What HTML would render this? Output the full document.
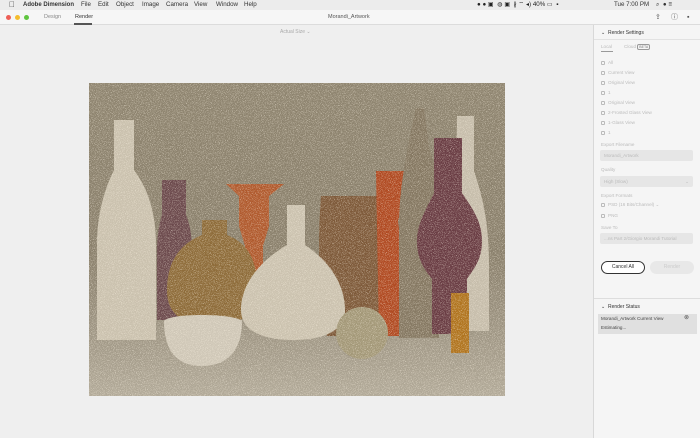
<!DOCTYPE html>
<html><head><style>
*{margin:0;padding:0;box-sizing:border-box}
body{width:700px;height:438px;overflow:hidden;background:#efefef;font-family:"Liberation Sans",sans-serif;position:relative;color:#333}
.a{position:absolute;white-space:nowrap}
.menu{left:0;top:0;width:700px;height:10px;background:#ececec;font-size:6.2px;line-height:10px}
.title{left:0;top:10px;width:700px;height:15px;background:#f6f6f6;border-bottom:1px solid #dcdcdc;font-size:5.5px;line-height:15px;color:#555}
.dot{position:absolute;top:15px;width:5px;height:5px;border-radius:50%}
.panel{left:593px;top:25px;width:107px;height:413px;background:#f5f5f5;border-left:1px solid #d8d8d8;font-size:4.6px;color:#bbb}
.panel .a{line-height:6px}
.cb{display:inline-block;width:4px;height:4px;border:0.6px solid #bbb;border-radius:1px;vertical-align:middle;margin-right:3px}
.fld{position:absolute;left:6px;width:93px;height:11px;background:#e6e6e6;border-radius:2px;color:#bbb;padding-left:4px;line-height:11px;font-size:4.6px}
</style></head><body>
<div class="a menu">
 <span class="a" style="left:9px;font-size:8px">&#63743;</span>
 <span class="a" style="left:23px;font-weight:bold;font-size:6px">Adobe Dimension</span>
 <span class="a" style="left:81px">File</span><span class="a" style="left:98px">Edit</span><span class="a" style="left:116px">Object</span><span class="a" style="left:142px">Image</span><span class="a" style="left:166px">Camera</span><span class="a" style="left:194px">View</span><span class="a" style="left:216px">Window</span><span class="a" style="left:244px">Help</span>
 <span class="a" style="left:477px;color:#222">● ● ▣ &nbsp;◍ ▣ &nbsp;∦ ⌔ ◂) 40% ▭ &nbsp;▪</span>
 <span class="a" style="left:614px">Tue 7:00 PM</span>
 <span class="a" style="left:656px">⌕ &nbsp;● ≡</span>
</div>
<div class="a title">
 <div class="dot" style="left:6px;top:5px;background:#ee5f57"></div>
 <div class="dot" style="left:15px;top:5px;background:#f5bd2f"></div>
 <div class="dot" style="left:24px;top:5px;background:#5fc53f"></div>
 <span class="a" style="left:44px;color:#888">Design</span>
 <span class="a" style="left:75px;color:#333">Render</span>
 <div class="a" style="left:74px;top:13px;width:18px;height:1.5px;background:#555"></div>
 <span class="a" style="left:328px">Morandi_Artwork</span>
 <span class="a" style="left:655px;font-size:7px">⇪</span><span class="a" style="left:671px;font-size:7px">ⓘ</span><span class="a" style="left:687px;font-size:7px">▪</span>
</div>
<div class="a" style="left:280px;top:29px;font-size:5px;color:#aaa">Actual Size ⌄</div>
<svg class="a" style="left:89px;top:83px" width="416" height="313" viewBox="0 0 416 313">
<defs>
<linearGradient id="bg" x1="0" y1="0" x2="0" y2="1"><stop offset="0" stop-color="#8f8570"/><stop offset=".55" stop-color="#8a806c"/><stop offset=".75" stop-color="#9a917f"/><stop offset="1" stop-color="#b2aa99"/></linearGradient>
<filter id="n" x="0" y="0" width="100%" height="100%"><feTurbulence type="fractalNoise" baseFrequency="1.2" numOctaves="2" result="t"/><feColorMatrix in="t" type="matrix" values="0 0 0 0 1 0 0 0 0 0.93 0 0 0 0 0.8 3 0 0 0 -1.5"/></filter>
</defs>
<rect width="416" height="313" fill="url(#bg)"/>
<path d="M25 37h20v50c15 20 22 45 22 75v95H8v-95c0-30 7-55 17-75z" fill="#cac1ae"/>
<path d="M73 97h24v35c4 10 6 20 6 40v65H68v-65c0-20 2-30 5-40z" fill="#6c4a4d"/>
<path d="M137 101h58l-15 12v30l-6 20v30h-18v-30l-6-20v-30z" fill="#b05a2e"/>
<path d="M113 137h25v15c25 10 30 30 30 55 0 20-10 35-45 35s-45-15-45-35c0-25 10-45 35-55z" fill="#8e6c3a"/>
<path d="M232 113h50l8 0 3 140h-55c-8-40-10-90-6-140z" fill="#7e5a3a"/>
<path d="M287 88h40l-10 20-8 30 5 40v75h-24z" fill="#b04a22"/>
<path d="M327 25h8l5 40c8 20 10 45 10 80v110h-40v-110c0-35 5-65 17-120z" fill="#857862"/>
<path d="M368 33h17v55c10 30 15 55 15 95v65h-35z" fill="#c6bdab"/>
<path d="M345 55h28v55c10 15 20 28 20 48s-10 30-15 38v55h-35v-55c-8-10-15-20-15-38s10-33 17-48z" fill="#6a3d44"/>
<path d="M198 122h18v40c30 20 40 45 40 65 0 20-20 30-52 30s-52-10-52-30c0-20 12-45 46-65z" fill="#cbc2af"/>
<path d="M75 238c5-8 70-8 78 0 0 30-15 45-40 45s-38-15-38-45z" fill="#cfc7b7"/>
<circle cx="273" cy="250" r="26" fill="#a39878"/>
<rect x="362" y="210" width="18" height="60" fill="#b0741f"/>
<rect width="416" height="313" filter="url(#n)" opacity=".7"/>
</svg>
<div class="a panel">
 <span class="a" style="left:7px;top:5px;color:#333;font-size:5px">⌄ &nbsp;Render Settings</span>
 <div class="a" style="left:0;top:14px;width:107px;height:1px;background:#e2e2e2"></div>
 <span class="a" style="left:7px;top:19px">Local</span><span class="a" style="left:30px;top:19px">Cloud <span style="border:0.6px solid #999;border-radius:2px;font-size:3.5px;padding:0 1px;color:#777">BETA</span></span>
 <div class="a" style="left:7px;top:26px;width:12px;height:1px;background:#999"></div>
 <span class="a" style="left:7px;top:35px"><i class="cb"></i>All</span>
 <span class="a" style="left:7px;top:45px"><i class="cb"></i>Current View</span>
 <span class="a" style="left:7px;top:55px"><i class="cb"></i>Original View</span>
 <span class="a" style="left:7px;top:65px"><i class="cb"></i>1</span>
 <span class="a" style="left:7px;top:75px"><i class="cb"></i>Original View</span>
 <span class="a" style="left:7px;top:85px"><i class="cb"></i>2-Frosted Glass View</span>
 <span class="a" style="left:7px;top:95px"><i class="cb"></i>1-Glass View</span>
 <span class="a" style="left:7px;top:105px"><i class="cb"></i>1</span>
 <span class="a" style="left:7px;top:117px">Export Filename</span>
 <div class="fld" style="top:125px">Morandi_Artwork</div>
 <span class="a" style="left:7px;top:142px">Quality</span>
 <div class="fld" style="top:151px">High (Slow)<span style="position:absolute;right:4px">⌄</span></div>
 <span class="a" style="left:7px;top:168px">Export Formats</span>
 <span class="a" style="left:7px;top:177px"><i class="cb"></i>PSD (16 Bits/Channel) ⌄</span>
 <span class="a" style="left:7px;top:188px"><i class="cb"></i>PNG</span>
 <span class="a" style="left:7px;top:200px">Save To</span>
 <div class="fld" style="top:208px">...ns Part 2/Giorgio Morandi Tutorial</div>
 <div class="a" style="left:7px;top:236px;width:44px;height:13px;border:1px solid #333;border-radius:7px;background:#fff;color:#333;font-size:5px;text-align:center;line-height:11px">Cancel All</div>
 <div class="a" style="left:56px;top:236px;width:44px;height:13px;border-radius:7px;background:#e8e8e8;color:#ccc;font-size:5px;text-align:center;line-height:13px">Render</div>
 <div class="a" style="left:0;top:273px;width:107px;height:1px;background:#ddd"></div>
 <span class="a" style="left:7px;top:279px;color:#333;font-size:5px">⌄ &nbsp;Render Status</span>
 <div class="a" style="left:4px;top:289px;width:99px;height:20px;background:#e0e0e0"></div>
 <span class="a" style="left:7px;top:291px;color:#444">Morandi_Artwork Current View</span>
 <span class="a" style="left:90px;top:290px;color:#555;font-size:6px">⊗</span>
 <span class="a" style="left:7px;top:300px;color:#444">Estimating...</span>
</div>
</body></html>
